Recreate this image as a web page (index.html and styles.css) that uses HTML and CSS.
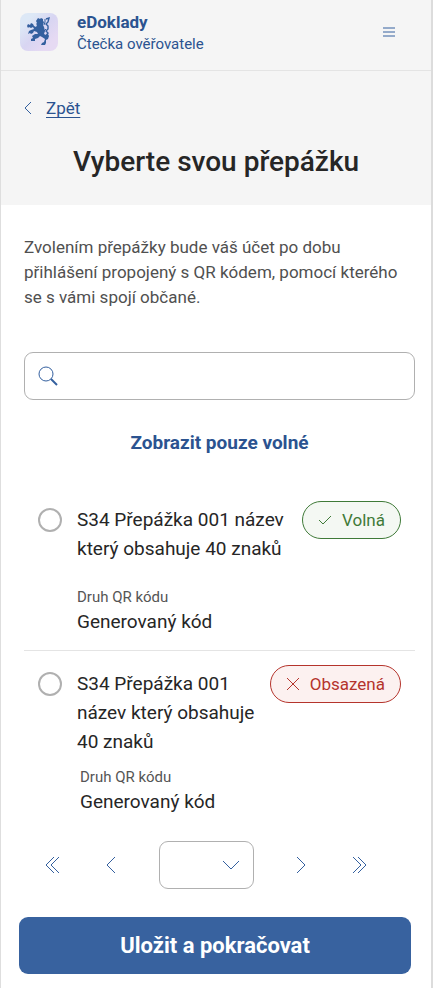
FILE: index.html
```html
<!DOCTYPE html>
<html lang="cs">
<head>
    <meta charset="UTF-8">
    <meta name="viewport" content="width=device-width, initial-scale=1.0">
    <title>eDoklady – Čtečka ověřovatele</title>
    <link rel="stylesheet" href="styles.css">
</head>
<body>
    <header class="header">
        <svg class="logo" viewBox="0 0 38 38" aria-hidden="true">
            <defs>
                <linearGradient id="logo-bg" x1="0" y1="0" x2="1" y2="1">
                    <stop offset="0.2" stop-color="#dde8f6"/>
                    <stop offset="0.5" stop-color="#d8d5f2"/>
                    <stop offset="0.8" stop-color="#e6daf3"/>
                </linearGradient>
            </defs>
            <rect width="38" height="38" rx="8" fill="url(#logo-bg)"/>
            <path fill="#34609f" d="M18 5l2 1 1-1 2 1v2l1 1-1 3 1 2 1 4-1 3 2 1 2-1 1 2-1 3-2 1v3l-1 2h-4l1-2 2-1 1-3-3-2-2-1-2 2-3 1v2h-4v-2l2-1-1-2 3-2h3l-1-2-3-1-1 2-2 1-1-1-2 1 1-3 2-1 3-1-1-2-2 1-2-1-1 1-1-2 1-2 2 1 1-2 2 1 1 2 2 1 1-2-1-1 1-1-1-2z"/>
            <path fill="none" stroke="#34609f" stroke-width="1.4" d="M26 6l3-1-1 4-2 2 2 2v3l-2 2 2 2-2 3"/>
            <path fill="none" stroke="#34609f" d="M24 12l1-3v-3M24 18l2-2"/>
        </svg>
        <div class="brand">
            <strong>eDoklady</strong>
            <span>Čtečka ověřovatele</span>
        </div>
        <button class="menu" type="button" aria-label="Menu">
            <svg width="12" height="10" viewBox="0 0 12 10"><path d="M0 1h12M0 5h12M0 9h12"/></svg>
        </button>
    </header>

    <section class="hero">
        <a class="back" href="#">
            <svg width="8" height="14" viewBox="0 0 8 14"><path d="M7 1L1 7l6 6"/></svg>
            <span>Zpět</span>
        </a>
        <h1>Vyberte svou přepážku</h1>
    </section>

    <main>
        <p class="intro">Zvolením přepážky bude váš účet po dobu přihlášení propojený s QR kódem, pomocí kterého se s vámi spojí občané.</p>

        <label class="search">
            <svg width="20" height="20" viewBox="0 0 20 20"><circle cx="8" cy="8" r="7"/><path d="M13 13l1 1"/><path class="handle" d="M13 13l6 6"/></svg>
            <input type="search" aria-label="Hledat přepážku">
        </label>

        <button class="filter" type="button">Zobrazit pouze volné</button>

        <ul class="list">
            <li class="item">
                <input type="radio" name="counter" id="counter1">
                <label class="name" for="counter1">S34 Přepážka 001 název který obsahuje 40 znaků</label>
                <span class="badge free">
                    <svg width="14" height="14" viewBox="0 0 14 14"><path d="M1 7l4 4 8-8"/></svg>
                    Volná
                </span>
                <dl class="detail">
                    <dt>Druh QR kódu</dt>
                    <dd>Generovaný kód</dd>
                </dl>
            </li>
            <li class="item compact">
                <input type="radio" name="counter" id="counter2">
                <label class="name" for="counter2">S34 Přepážka 001 název který obsahuje 40 znaků</label>
                <span class="badge taken">
                    <svg width="14" height="14" viewBox="0 0 14 14"><path d="M1 1l12 12M13 1L1 13"/></svg>
                    Obsazená
                </span>
                <dl class="detail">
                    <dt>Druh QR kódu</dt>
                    <dd>Generovaný kód</dd>
                </dl>
            </li>
        </ul>
    </main>

    <nav class="pager" aria-label="Stránkování">
        <button type="button" aria-label="První"><svg width="14" height="16" viewBox="0 0 14 16"><path d="M9 0L1 8l8 8M14 0L6 8l8 8"/></svg></button>
        <button type="button" aria-label="Předchozí"><svg width="10" height="16" viewBox="0 0 10 16"><path d="M9 0L1 8l8 8"/></svg></button>
        <div class="page">
            <select aria-label="Stránka"><option></option></select>
            <svg width="16" height="9" viewBox="0 0 16 9"><path d="M0 0l8 8 8-8"/></svg>
        </div>
        <button type="button" aria-label="Další"><svg width="10" height="16" viewBox="0 0 10 16"><path d="M1 0l8 8-8 8"/></svg></button>
        <button type="button" aria-label="Poslední"><svg width="14" height="16" viewBox="0 0 14 16"><path d="M0 0l8 8-8 8M5 0l8 8-8 8"/></svg></button>
    </nav>

    <div class="footer">
        <button class="submit" type="submit">Uložit a pokračovat</button>
    </div>
</body>
</html>
```
FILE: styles.css
```css
* {
    box-sizing: border-box;
}
body {
    margin: 0;
    min-height: 100vh;
    border-left: 1px solid #dedede;
    border-right: 2px solid #dcdcdc;
    background: #fff;
    color: #262626;
    font-family: Roboto, sans-serif;
    font-size: 17px;
}
button {
    padding: 0;
    border: none;
    background: none;
    font-family: inherit;
    cursor: pointer;
}
svg {
    display: block;
    flex: none;
    fill: none;
    stroke: #34609f;
}
.header {
    display: flex;
    align-items: center;
    height: 71px;
    padding: 0 36px 6px 19px;
    background: #f5f5f5;
    border-bottom: 1px solid #e4e4e4;
}
.logo {
    width: 38px;
    height: 38px;
    stroke: none;
}
.brand {
    flex: 1;
    display: flex;
    flex-direction: column;
    margin-left: 19px;
    padding-top: 2px;
    color: #2b5390;
    font-size: 15px;
    line-height: 22px;
}
.brand strong {
    font-size: 17px;
}
/* hero */
.hero {
    height: 134px;
    padding: 26px 23px 0;
    background: #f5f5f5;
}
.back {
    display: inline-flex;
    align-items: center;
    gap: 14px;
    color: #2b5390;
    line-height: 22px;
    text-decoration: none;
}
.back span {
    text-decoration: underline;
    text-underline-offset: 3px;
}
h1 {
    margin: 25px 0 0;
    font-size: 28px;
    font-weight: 500;
    line-height: 36px;
    text-align: center;
}
main {
    padding: 30px 16px 0 23px;
}
.intro {
    margin: 0 0 42px;
    color: #505050;
    line-height: 25px;
}
.search {
    display: flex;
    align-items: center;
    gap: 12px;
    height: 48px;
    padding: 0 13px;
    border: 1px solid #b0b0b0;
    border-radius: 9px;
}
.search .handle {
    stroke-width: 2;
}
.search input {
    flex: 1;
    min-width: 0;
    border: none;
    outline: none;
    background: none;
    font: inherit;
}
.filter {
    display: block;
    margin: 31px auto 0;
    color: #2b5390;
    font-size: 19px;
    font-weight: 700;
    line-height: 24px;
}
/* list of counters */
.list {
    margin: 46px 0 0;
    padding: 0;
    list-style: none;
}
.item {
    display: grid;
    grid-template-columns: 24px 1fr auto;
    column-gap: 12px;
    align-items: start;
    padding: 0 14px 14px;
}
.item + .item {
    padding-top: 14px;
    border-top: 1px solid #e4e4e4;
}
.item input {
    appearance: none;
    width: 24px;
    height: 24px;
    margin: 7px 0 0;
    border: 2px solid #b0b0b0;
    border-radius: 50%;
}
.item input:checked {
    border: 7px solid #34609f;
}
.name {
    margin: 4px 0 0 3px;
    font-size: 19px;
    line-height: 29px;
}
.badge {
    display: flex;
    align-items: center;
    gap: 10px;
    height: 38px;
    padding: 0 15px;
    border: 1px solid;
    border-radius: 19px;
}
.badge svg {
    stroke: currentColor;
}
.free {
    color: #3f7a38;
    background: #f4f8f3;
}
.taken {
    color: #b5342c;
    background: #fcf1f0;
}
.detail {
    grid-column: 2;
    margin: 23px 0 0 3px;
}
.compact .detail {
    margin: 10px 0 0 6px;
}
.detail dt {
    color: #555;
    font-size: 15px;
    line-height: 22px;
}
.detail dd {
    margin: 0;
    font-size: 19px;
    line-height: 28px;
}
/* paging */
.pager {
    display: flex;
    align-items: center;
    justify-content: space-between;
    margin: 11px 59px 0 39px;
}
.pager button {
    display: flex;
    justify-content: center;
    width: 24px;
}
.page {
    position: relative;
}
.page select {
    appearance: none;
    display: block;
    width: 95px;
    height: 48px;
    border: 1px solid #b0b0b0;
    border-radius: 9px;
    background: none;
}
.page svg {
    position: absolute;
    top: 20px;
    right: 15px;
    pointer-events: none;
}
.footer {
    padding: 28px 20px 15px 18px;
}
.submit {
    width: 100%;
    height: 57px;
    border-radius: 9px;
    background: #38629f;
    color: #fff;
    font-size: 22px;
    font-weight: 700;
}
```
